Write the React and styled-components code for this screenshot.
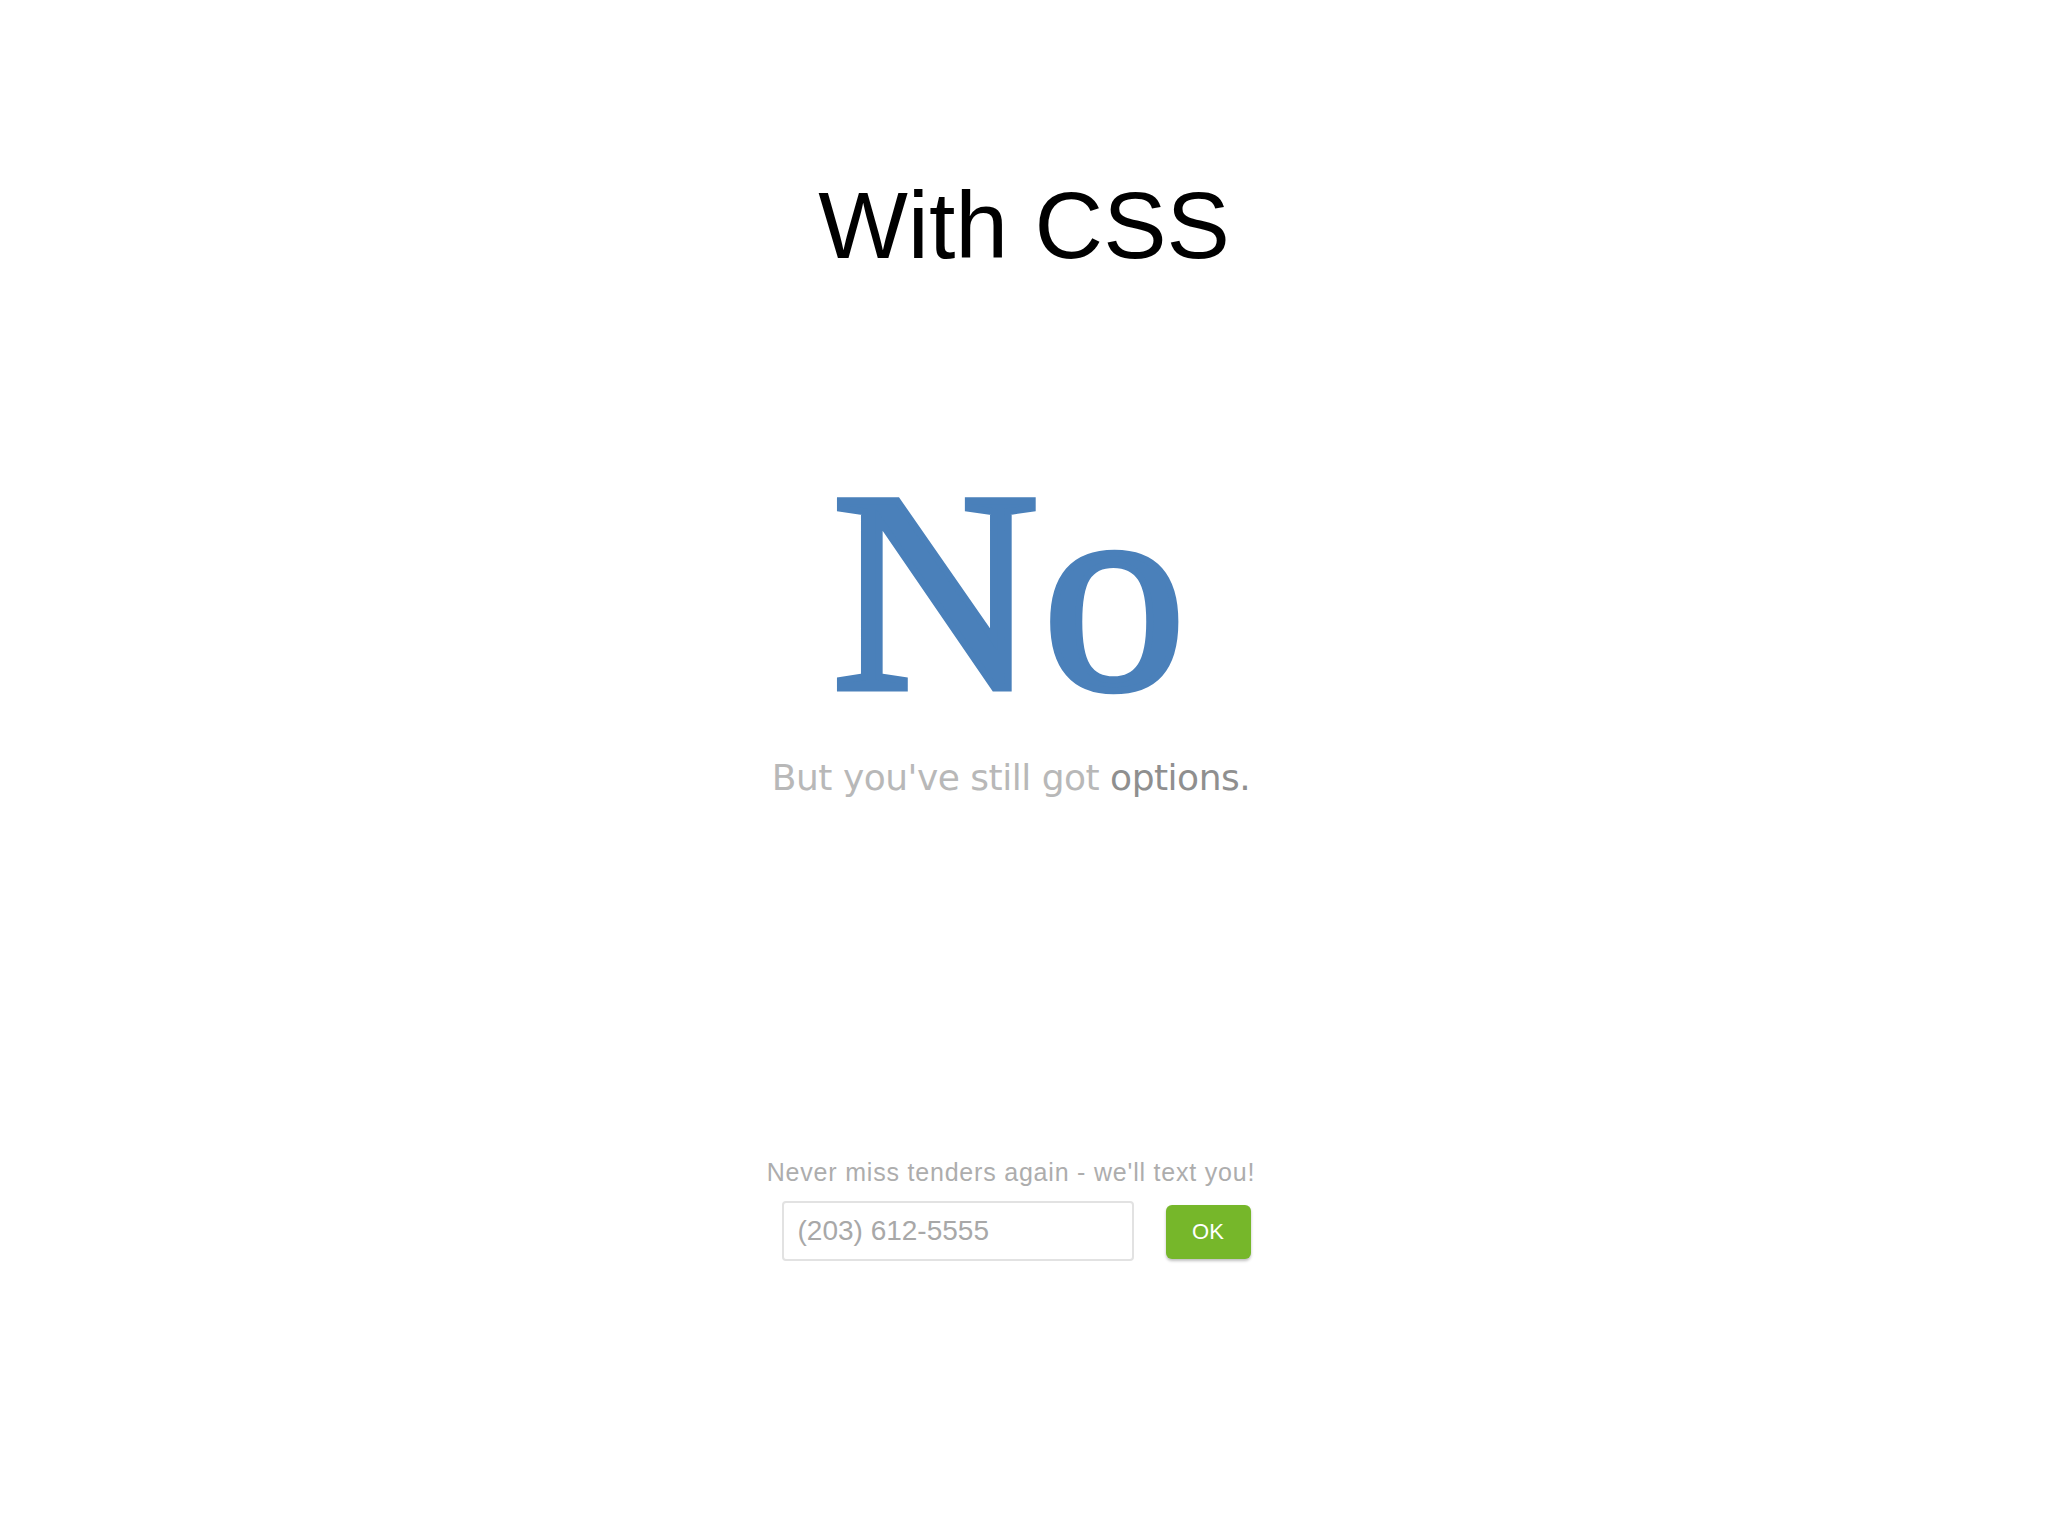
import React from "react";
import styled, { createGlobalStyle } from "styled-components";

const GlobalStyle = createGlobalStyle`
  html, body {
    margin: 0;
    padding: 0;
    background: #ffffff;
  }
`;

const Page = styled.div`
  width: 2048px;
  height: 1536px;
  display: flex;
  flex-direction: column;
  align-items: center;
  overflow: hidden;
`;

const Title = styled.h1`
  margin: 178px 0 0;
  font-family: "Liberation Sans", Arial, sans-serif;
  font-weight: 400;
  font-size: 95px;
  line-height: 1;
  color: #000;
`;

const Card = styled.div`
  display: flex;
  flex-direction: column;
  align-items: center;
  margin-right: 26px;
`;

/* regular serif thickened a little with a stroke: semibold look */
const Big = styled.div`
  margin-top: 176px;
  font-family: "Liberation Serif", "Times New Roman", serif;
  font-weight: 400;
  font-size: 286px;
  line-height: 1;
  color: #4a80ba;
  -webkit-text-stroke: 7px #4a80ba;
  letter-spacing: 4px;
`;

const Tagline = styled.p`
  margin: 22px 0 0;
  font-family: "DejaVu Sans", Verdana, sans-serif;
  font-size: 36px;
  color: #b8b8b8;
  letter-spacing: -0.5px;

  strong {
    font-weight: 400;
    color: #8f8f8f;
  }
`;

const SignupNote = styled.p`
  margin: 360px 0 0;
  font-family: "Liberation Sans", Arial, sans-serif;
  font-size: 25px;
  letter-spacing: 0.8px;
  color: #adadad;
`;

const SignupRow = styled.form`
  display: flex;
  align-items: center;
  gap: 32px;
  margin-top: 14px;
  padding-left: 10px;
`;

const PhoneInput = styled.input`
  box-sizing: border-box;
  width: 352px;
  height: 60px;
  padding: 0 14px;
  border: 2px solid #e2e2e2;
  border-radius: 4px;
  font-family: "Liberation Sans", Arial, sans-serif;
  font-size: 28px;
  color: #555;
  outline: none;

  &::placeholder {
    color: #a8a8a8;
  }
`;

const OkButton = styled.button`
  width: 85px;
  height: 54px;
  margin-top: 2px;
  border: none;
  border-radius: 6px;
  background: #76b72a;
  box-shadow: 0 2px 3px rgba(0, 0, 0, 0.25);
  font-family: "Liberation Sans", Arial, sans-serif;
  font-size: 22px;
  color: #fff;
  cursor: pointer;
`;

export default function App() {
  return (
    <>
      <GlobalStyle />
      <Page>
        <Title>With CSS</Title>
        <Card>
          <Big>No</Big>
          <Tagline>
            But you've still got <strong>options.</strong>
          </Tagline>
          <SignupNote>Never miss tenders again - we'll text you!</SignupNote>
          <SignupRow onSubmit={(e) => e.preventDefault()}>
            <PhoneInput type="tel" placeholder="(203) 612-5555" />
            <OkButton type="submit">OK</OkButton>
          </SignupRow>
        </Card>
      </Page>
    </>
  );
}
